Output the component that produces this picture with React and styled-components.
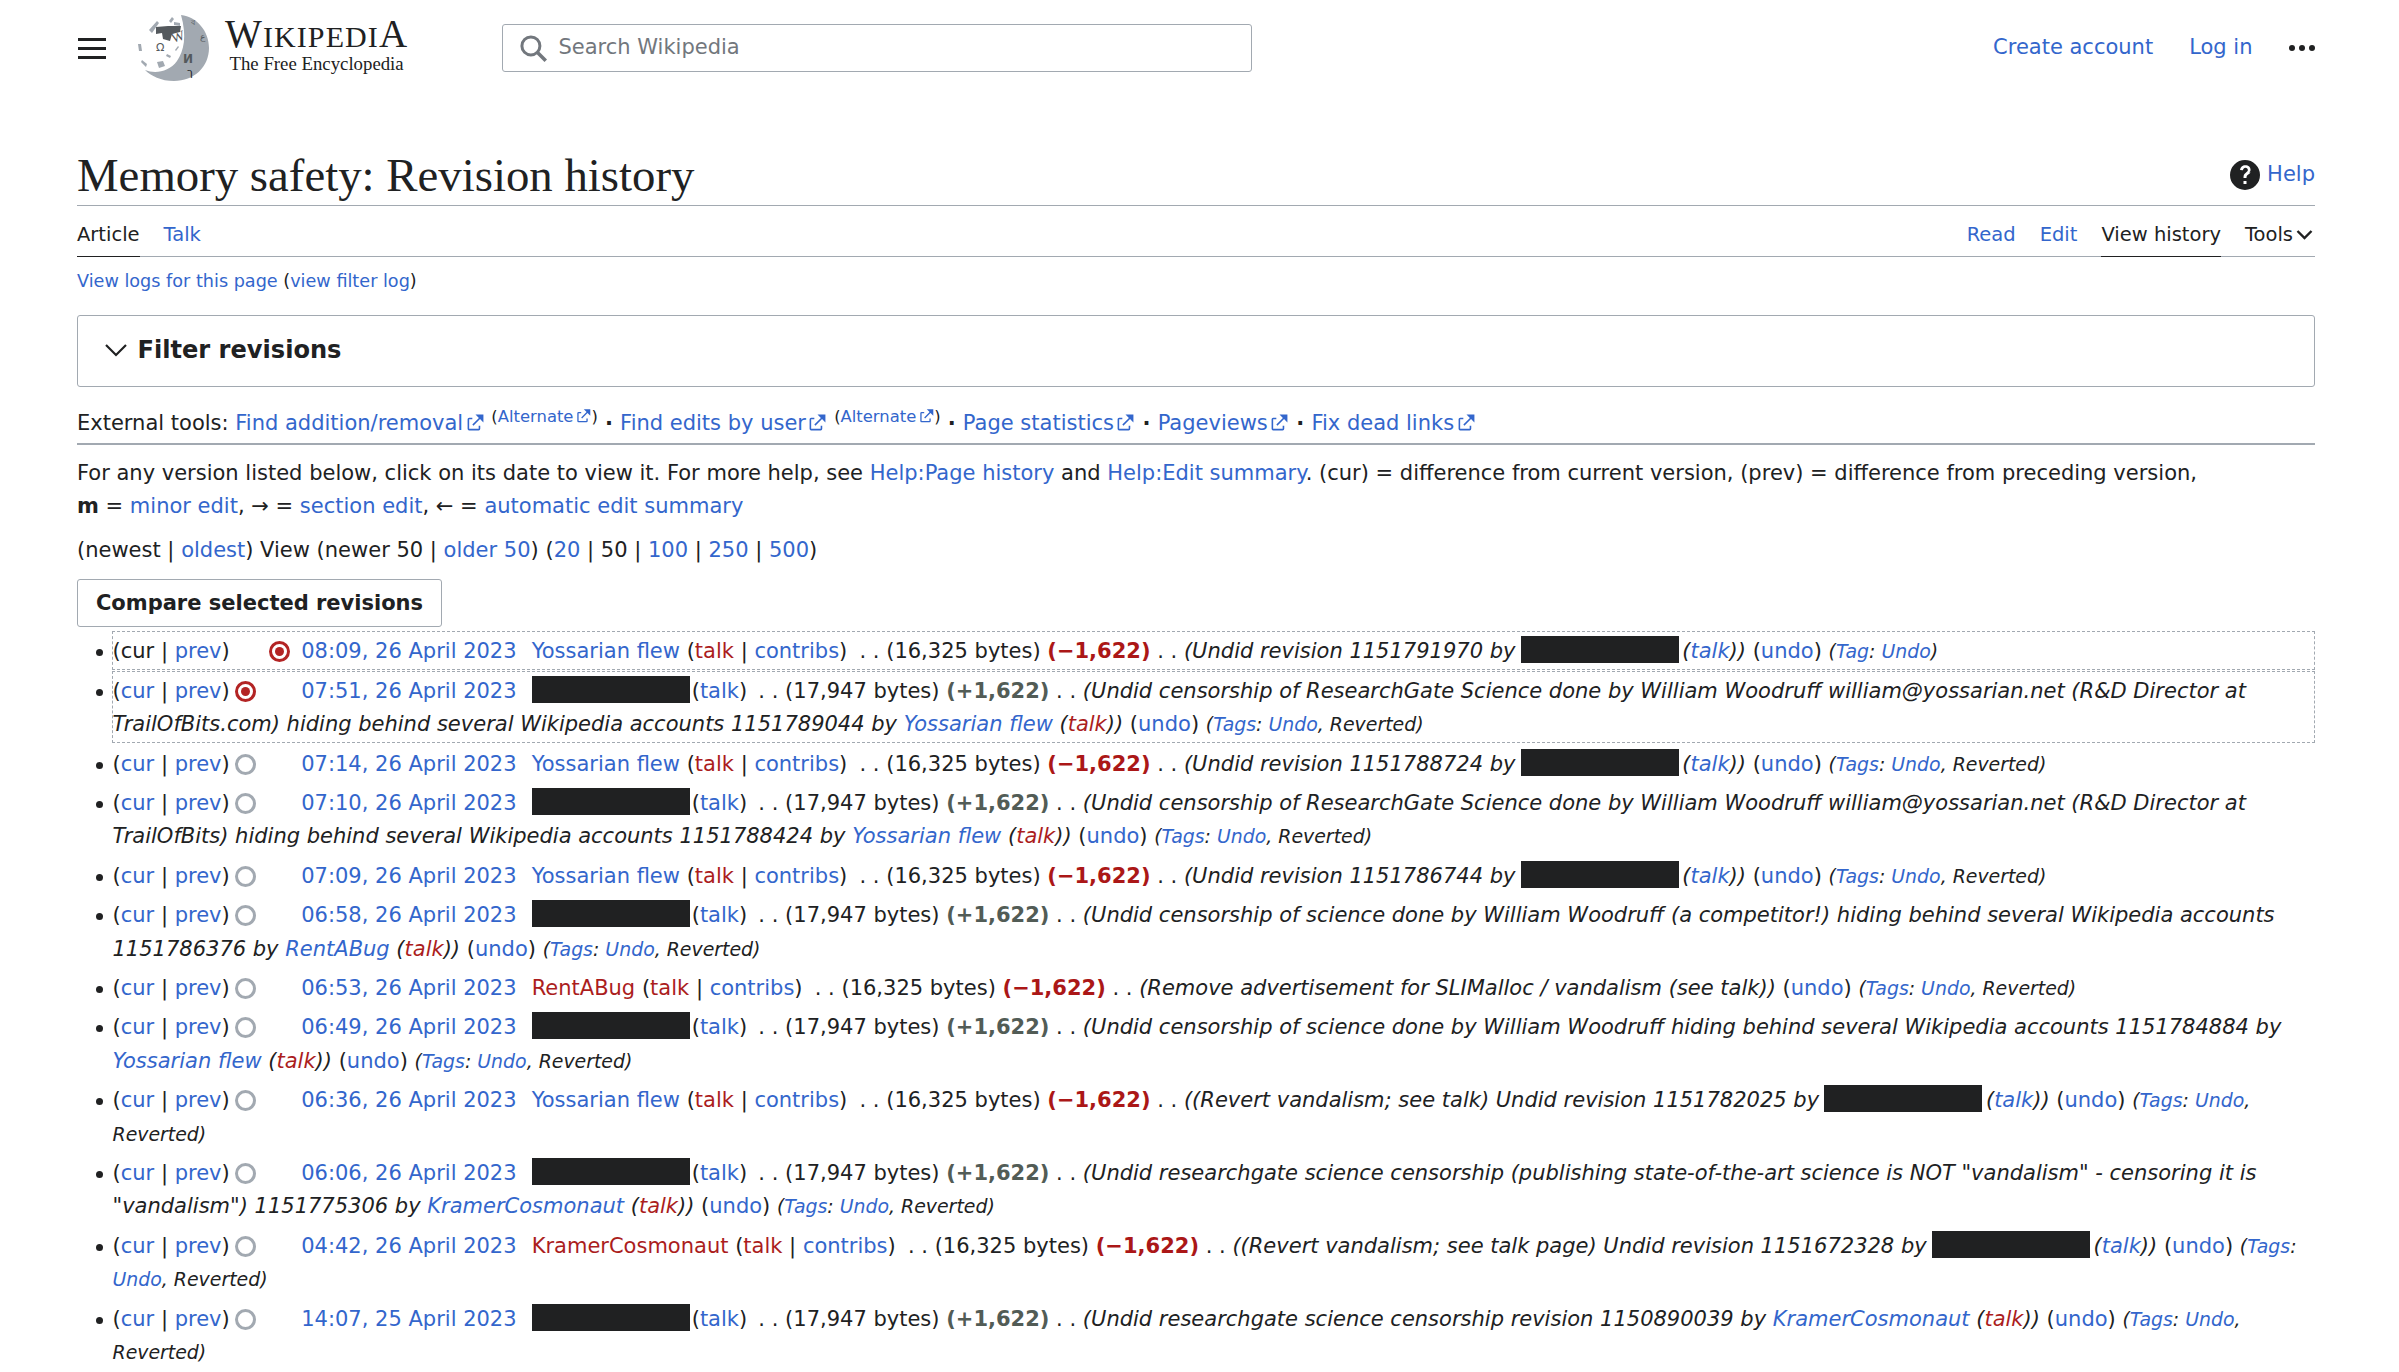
import React from "react";
import styled, { createGlobalStyle } from "styled-components";

const Global = createGlobalStyle`
  html, body { margin: 0; padding: 0; background: #fff; overflow: hidden; height: 100%; }
  body { font-family: "DejaVu Sans", sans-serif; font-size: 21px; line-height: 33.6px; color: #202122; }
`;

const Page = styled.div`
  padding: 0 84px 0 77px;
`;
const Header = styled.header`
  display: flex;
  align-items: center;
  height: 48px;
  padding-top: 24px;
  padding-bottom: 24px;
`;
const Burger = styled.button`
  display: flex;
  flex-direction: column;
  gap: 6px;
  width: 28px;
  margin-left: 1px;
  padding: 0;
  border: 0;
  background: none;
  span { display: block; height: 3px; background: #202122; }
`;
const Brand = styled.div`
  display: flex;
  align-items: center;
  gap: 16px;
  margin-left: 31px;
  width: 365px;
`;
const Wordmark = styled.div`
  display: flex;
  flex-direction: column;
  margin-bottom: 6px;
  font-family: "Liberation Serif", serif;
  color: #202122;
`;
const WordTop = styled.div`
  font-size: 39px;
  line-height: 34px;
  letter-spacing: 1.1px;
  small { font-size: 30px; }
`;
const WordSub = styled.div`
  font-size: 18.8px;
  line-height: 20px;
  margin-left: 4.5px;
`;
const Search = styled.div`
  display: flex;
  align-items: center;
  gap: 11px;
  box-sizing: border-box;
  width: 750px;
  height: 48px;
  padding-left: 14.5px;
  border: 1.5px solid #a2a9b1;
  border-radius: 3px;
  color: #72777d;
`;
const UserLinks = styled.nav`
  display: flex;
  align-items: center;
  margin-left: auto;
`;
const A = styled.a`
  color: ${p => (p.$red ? "#ab1d1d" : "#3366cc")};
  text-decoration: none;
`;
const HeadLink = styled(A)`
  margin-right: 36px;
`;
const Dots = styled.div`
  display: flex;
  gap: 4px;
  margin-left: 0.5px;
  span { display: block; width: 6px; height: 6px; border-radius: 50%; background: #202122; }
`;
const TitleRow = styled.div`
  display: flex;
  justify-content: space-between;
  align-items: flex-end;
  height: 110px;
  box-sizing: border-box;
  padding-bottom: 1px;
  border-bottom: 1.5px solid #a2a9b1;
`;
const Title = styled.h1`
  margin: 0;
  font: 400 46.8px/58px "Liberation Serif", serif;
  color: #202122;
`;
const HelpLink = styled(A)`
  display: flex;
  align-items: center;
  gap: 7px;
  height: 33px;
  margin-bottom: 12.5px;
`;
const Tabs = styled.nav`
  display: flex;
  justify-content: space-between;
  height: 51px;
  box-sizing: border-box;
  border-bottom: 1.5px solid #a2a9b1;
`;
const TabGroup = styled.div`
  display: flex;
  gap: 24px;
`;
const Tab = styled.a`
  display: flex;
  align-items: center;
  gap: 1px;
  height: 51px;
  box-sizing: border-box;
  padding-top: 7px;
  font-size: 19.5px;
  text-decoration: none;
  color: ${p => (p.$link ? "#3366cc" : "#202122")};
  border-bottom: ${p => (p.$active ? "1.5px solid #202122" : "1.5px solid transparent")};
`;
const Logs = styled.div`
  font-size: 17.64px;
  line-height: 30px;
  margin-top: 9px;
`;
const Filter = styled.div`
  display: flex;
  align-items: center;
  gap: 10px;
  box-sizing: border-box;
  height: 72px;
  margin-top: 19px;
  padding: 0 0 0 25.5px;
  border: 1.5px solid #a2a9b1;
  border-radius: 3px;
  font-size: 24.1px;
  font-weight: 700;
  svg { margin-bottom: 3px; }
`;
const Tools = styled.div`
  margin-top: 20px;
  padding-bottom: 2px;
  border-bottom: 2px solid #a2a9b1;
  white-space: nowrap;
`;
const Sup = styled.sup`
  font-size: 16.4px;
  line-height: 0;
  vertical-align: 8px;
`;
const Bullet = styled.b`
  padding: 0 0.4px;
`;
const Help = styled.p`
  margin: 12px 0 0;
`;
const Nav = styled.p`
  margin: 10px 0 0;
`;
const Button = styled.button`
  display: block;
  box-sizing: border-box;
  height: 48px;
  width: 365px;
  margin: 12px 0 0;
  padding: 0;
  background: #fff;
  border: 1.5px solid #a2a9b1;
  border-radius: 3px;
  font: 700 21px/33px "DejaVu Sans", sans-serif;
  color: #202122;
`;
const List = styled.ul`
  list-style: none;
  margin: 4px 0 0;
  padding: 0 0 0 34.5px;
`;
const Row = styled.li`
  position: relative;
  padding-top: 3px;
  margin-bottom: 0.7px;
  border: 1px ${p => (p.$sel ? "dashed #a2a9b1" : "solid transparent")};
  &::before {
    content: "";
    position: absolute;
    left: -16.5px;
    top: 17px;
    width: 7px;
    height: 7px;
    border-radius: 50%;
    background: #202122;
  }
`;
const Radio = styled.span`
  display: inline-block;
  box-sizing: border-box;
  position: relative;
  visibility: ${p => (p.$hidden ? "hidden" : "visible")};
  width: 21px;
  height: 21px;
  margin: 0 8.5px 0 5px;
  vertical-align: -4px;
  border-radius: 50%;
  border: 3px solid ${p => (p.$on ? "#b32424" : "#a2a9b1")};
  background: #fff;
  &::after {
    content: "";
    display: ${p => (p.$on ? "block" : "none")};
    position: absolute;
    inset: 3px;
    border-radius: 50%;
    background: #b32424;
  }
`;
const When = styled.span`
  margin-left: 2.5px;
`;
const Who = styled.span`
  margin-left: 8.4px;
`;
const Box = styled.span`
  display: inline-block;
  width: 158px;
  height: 27px;
  vertical-align: -5px;
  background: #202122;
`;
const NoteBox = styled(Box)`
  margin: 0 -3px 0 -1.5px;
`;
const BoxLabel = styled.span`
  margin-left: 2px;
`;
const Tail = styled.span`
  margin-left: ${p => (p.$wide ? "5.5px" : "4.5px")};
`;
const Delta = styled.strong`
  color: ${p => (p.$neg ? "#ab1717" : "#525c56")};
`;
const Note = styled.em`
  font-style: italic;
`;
const Tags = styled.span`
  font-size: 18.9px;
  font-style: italic;
`;

const Ext = ({ size = 19 }) => (
  <svg width={size} height={size} viewBox="0 0 12 12" fill="#3366cc" style={{ marginLeft: 2.5, verticalAlign: -2 }}>
    <path d="M6 1h5v5L8.86 3.85 4.7 8 4 7.3l4.15-4.16L6 1Z" />
    <path d="M2 3h2v1H2v6h6V8h1v2a1 1 0 0 1-1 1H2a1 1 0 0 1-1-1V4a1 1 0 0 1 1-1Z" />
  </svg>
);

const Globe = () => (
  <svg width="72" height="68" viewBox="0 0 72 68">
    <path d="M44 1C60 3 72 17 72 34 72 53 57 67 37 67 24 67 14 62 8 56 18 60 32 58 40 47 47 37 50 22 44 1Z" fill="#a2a9b1" />
    <path d="M33 13h13l-1 6-8 2-2 7-7-2-1-6-6 1 0-7Z" fill="#54595d" transform="translate(-2 -1)" />
    <g fill="#a2a9b1">
      <path d="M12 16l8-9 2 2-7 10ZM32 7l3-4 2 2-3 4ZM37 8l6 1 0 3-6-1ZM1 30l3 0 1 7-3 0ZM5 46l5 4-1 3-5-5ZM20 48l6-1 2 5-6 2ZM30 40l4 2-1 2-4-2ZM38 36l3-4 1 1-3 4Z" />
    </g>
    <text x="19" y="37" fontFamily="DejaVu Sans" fontSize="11" fill="#54595d">Ω</text>
    <text x="36" y="29" fontFamily="Liberation Serif" fontSize="14" fill="#54595d" transform="rotate(-18 36 29)">W</text>
    <text x="46" y="49" fontFamily="DejaVu Sans" fontSize="12" fontWeight="700" fill="#54595d">И</text>
    <text x="50" y="62" fontFamily="DejaVu Sans" fontSize="11" fill="#202122">ך</text>
    <text x="63" y="26" fontFamily="DejaVu Sans" fontSize="9" fill="#54595d">ع</text>
    <text x="54" y="11" fontFamily="DejaVu Sans" fontSize="8" fill="#54595d">ব</text>
  </svg>
);

const Sep = () => <> . . </>;
const Talk = () => <>(<A $red>talk</A> | <A>contribs</A>)</>;
const BoxTalk = () => <BoxLabel>(<A>talk</A>)</BoxLabel>;

const TagList = ({ single }) => (
  <Tags>
    {single ? <>(<A>Tag</A>: <A>Undo</A>)</> : <>(<A>Tags</A>: <A>Undo</A>, Reverted)</>}
  </Tags>
);

const Undo = ({ single }) => (
  <> (<A>undo</A>) <TagList single={single} /></>
);

const RevRow = ({ sel, cur, first, second, date, user, red, bytes, neg, children, single }) => (
  <Row $sel={sel}>
    ({cur ? <A>cur</A> : "cur"} | <A>prev</A>)
    <Radio $hidden={first === "hide"} $on={first === "on"} />
    <Radio $hidden={second !== "on"} $on={second === "on"} />
    <When><A>{date}</A></When>
    {" "}
    <Who>
      {user ? <><A $red={red}>{user}</A> <Talk /></> : <><Box /><BoxTalk /></>}
    </Who>
    <Tail $wide={!!user} />
    <Sep />({bytes} bytes) <Delta $neg={neg}>({neg ? "−" : "+"}1,622)</Delta>
    <Sep /><Note>{children}</Note>
    <Undo single={single} />
  </Row>
);

const TalkNote = ({ user }) => (
  <><A>{user}</A> (<A $red>talk</A>))</>
);
const Hidden = () => (
  <><NoteBox /> (<A>talk</A>))</>
);

export default function App() {
  return (
    <Page>
      <Global />
      <Header>
        <Burger aria-label="menu"><span /><span /><span /></Burger>
        <Brand>
          <Globe />
          <Wordmark>
            <WordTop>W<small>IKIPEDI</small>A</WordTop>
            <WordSub>The Free Encyclopedia</WordSub>
          </Wordmark>
        </Brand>
        <Search>
          <svg width="30" height="30" viewBox="0 0 20 20" fill="none" stroke="#72777d">
            <circle cx="8.6" cy="8.6" r="6" strokeWidth="2" />
            <path d="M13 13l5.500 5.500" strokeWidth="2.4" />
          </svg>
          Search Wikipedia
        </Search>
        <UserLinks>
          <HeadLink>Create account</HeadLink>
          <HeadLink>Log in</HeadLink>
          <Dots><span /><span /><span /></Dots>
        </UserLinks>
      </Header>

      <TitleRow>
        <Title>Memory safety: Revision history</Title>
        <HelpLink>
          <svg width="30" height="30" viewBox="0 0 20 20" fill="#202122">
            <path d="M10 0a10 10 0 1 0 0 20 10 10 0 0 0 0-20zm1 16H9v-2h2zm2.7-7.700c-.3.400-.8.900-1.500 1.300-.5.400-.9.700-1 1-.1.200-.2.600-.2 1.400H9c0-1 .1-1.700.3-2.200.2-.5.700-1 1.400-1.500.4-.3.700-.5.900-.8.2-.3.3-.6.300-.9 0-.4-.1-.7-.4-1-.3-.3-.7-.4-1.200-.4-.4 0-.8.1-1.100.4-.3.200-.5.700-.6 1.300L6.700 6.700c.1-1 .5-1.800 1.100-2.300C8.400 3.800 9.200 3.500 10.200 3.500c1.100 0 1.900.3 2.600.9.600.6.900 1.300.900 2.100 0 .7-.2 1.300-.9 1.800z" />
          </svg>
          Help
        </HelpLink>
      </TitleRow>

      <Tabs>
        <TabGroup>
          <Tab $active>Article</Tab>
          <Tab $link>Talk</Tab>
        </TabGroup>
        <TabGroup>
          <Tab $link>Read</Tab>
          <Tab $link>Edit</Tab>
          <Tab $active>View history</Tab>
          <Tab>
            Tools
            <svg width="21" height="21" viewBox="0 0 12 12" fill="none" stroke="#202122" strokeWidth="1.4"><path d="M2 4l4 4 4-4" /></svg>
          </Tab>
        </TabGroup>
      </Tabs>

      <Logs>
        <A>View logs for this page</A> (<A>view filter log</A>)
      </Logs>

      <Filter>
        <svg width="24" height="14" viewBox="0 0 24 14" fill="none" stroke="#202122" strokeWidth="2.2"><path d="M2 2l10 10L22 2" /></svg>
        Filter revisions
      </Filter>

      <Tools>
        External tools: <A>Find addition/removal<Ext /></A> <Sup>(<A>Alternate<Ext size={15.6} /></A>)</Sup> <Bullet>·</Bullet>{" "}
        <A>Find edits by user<Ext /></A> <Sup>(<A>Alternate<Ext size={15.6} /></A>)</Sup> <Bullet>·</Bullet>{" "}
        <A>Page statistics<Ext /></A> <Bullet>·</Bullet> <A>Pageviews<Ext /></A> <Bullet>·</Bullet> <A>Fix dead links<Ext /></A>
      </Tools>

      <Help>
        For any version listed below, click on its date to view it. For more help, see <A>Help:Page history</A> and <A>Help:Edit summary</A>. (cur) = difference from current version, (prev) = difference from preceding version,<br />
        <b>m</b> = <A>minor edit</A>, → = <A>section edit</A>, ← = <A>automatic edit summary</A>
      </Help>

      <Nav>
        (newest | <A>oldest</A>) View (newer 50 | <A>older 50</A>) (<A>20</A> | 50 | <A>100</A> | <A>250</A> | <A>500</A>)
      </Nav>

      <Button>Compare selected revisions</Button>

      <List>
        <RevRow sel first="hide" second="on" date="08:09, 26 April 2023" user="Yossarian flew" bytes="16,325" neg single>
          (Undid revision 1151791970 by <Hidden />
        </RevRow>
        <RevRow sel cur first="on" date="07:51, 26 April 2023" bytes="17,947">
          (Undid censorship of ResearchGate Science done by William Woodruff william@yossarian.net (R&amp;D Director at TrailOfBits.com) hiding behind several Wikipedia accounts 1151789044 by <TalkNote user="Yossarian flew" />
        </RevRow>
        <RevRow cur date="07:14, 26 April 2023" user="Yossarian flew" bytes="16,325" neg>
          (Undid revision 1151788724 by <Hidden />
        </RevRow>
        <RevRow cur date="07:10, 26 April 2023" bytes="17,947">
          (Undid censorship of ResearchGate Science done by William Woodruff william@yossarian.net (R&amp;D Director at TrailOfBits) hiding behind several Wikipedia accounts 1151788424 by <TalkNote user="Yossarian flew" />
        </RevRow>
        <RevRow cur date="07:09, 26 April 2023" user="Yossarian flew" bytes="16,325" neg>
          (Undid revision 1151786744 by <Hidden />
        </RevRow>
        <RevRow cur date="06:58, 26 April 2023" bytes="17,947">
          (Undid censorship of science done by William Woodruff (a competitor!) hiding behind several Wikipedia accounts 1151786376 by <TalkNote user="RentABug" />
        </RevRow>
        <RevRow cur date="06:53, 26 April 2023" user="RentABug" red bytes="16,325" neg>
          (Remove advertisement for SLIMalloc / vandalism (see talk))
        </RevRow>
        <RevRow cur date="06:49, 26 April 2023" bytes="17,947">
          (Undid censorship of science done by William Woodruff hiding behind several Wikipedia accounts 1151784884 by <TalkNote user="Yossarian flew" />
        </RevRow>
        <RevRow cur date="06:36, 26 April 2023" user="Yossarian flew" bytes="16,325" neg>
          ((Revert vandalism; see talk) Undid revision 1151782025 by <Hidden />
        </RevRow>
        <RevRow cur date="06:06, 26 April 2023" bytes="17,947">
          (Undid researchgate science censorship (publishing state-of-the-art science is NOT "vandalism" - censoring it is "vandalism") 1151775306 by <TalkNote user="KramerCosmonaut" />
        </RevRow>
        <RevRow cur date="04:42, 26 April 2023" user="KramerCosmonaut" red bytes="16,325" neg>
          ((Revert vandalism; see talk page) Undid revision 1151672328 by <Hidden />
        </RevRow>
        <RevRow cur date="14:07, 25 April 2023" bytes="17,947">
          (Undid researchgate science censorship revision 1150890039 by <TalkNote user="KramerCosmonaut" />
        </RevRow>
      </List>
    </Page>
  );
}
